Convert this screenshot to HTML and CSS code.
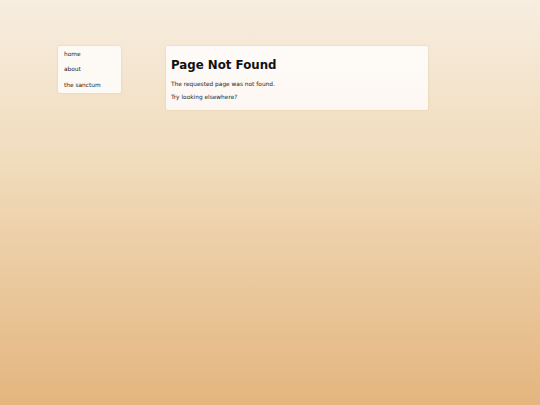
FILE: index.html
```html
<!DOCTYPE html>
<html>
<head>
<meta charset="utf-8">
<link rel="stylesheet" href="styles.css">
</head>
<body>
<div class="page">
  <nav class="nav">
    <a class="nav-item" href="#">home</a>
    <a class="nav-item" href="#">about</a>
    <a class="nav-item" href="#">the sanctum</a>
  </nav>
  <main class="content">
    <h1 class="title">Page Not Found</h1>
    <p class="text">The requested page was not found.</p>
    <p class="text">Try looking elsewhere?</p>
  </main>
</div>
</body>
</html>
```
FILE: styles.css
```css
html, body {
  margin: 0;
  padding: 0;
}
body {
  min-height: 405px;
  background: linear-gradient(to bottom, #f7ede0 0%, #f1dcbc 40%, #e4b57e 100%);
  font-family: "DejaVu Sans", sans-serif;
}
.page {
  display: flex;
  align-items: flex-start;
  gap: 45px;
  padding: 46px 0 0 58px;
}
.nav {
  width: 63px;
  display: flex;
  flex-direction: column;
  background: #fdfaf6;
  border-radius: 2px;
  box-shadow: 0 0 2px rgba(180, 130, 70, 0.25);
  padding: 1px 0 0 0;
}
.nav-item {
  display: block;
  padding: 0 6px;
  line-height: 15.3px;
  font-size: 5.85px;
  color: #222;
  text-decoration: none;
}
.content {
  width: 252px;
  padding: 12px 5px 8.5px 5px;
  background: linear-gradient(to bottom, #fdfbf8, #fdf7f3);
  border-radius: 2px;
  box-shadow: 0 0 2px rgba(180, 130, 70, 0.25);
}
.title {
  margin: 0 0 8px 0;
  font-size: 11.8px;
  line-height: 14px;
  font-weight: bold;
  color: #111;
}
.text {
  margin: 0 0 5px 0;
  font-size: 5.85px;
  line-height: 8px;
  color: #222;
}
.text:last-child {
  margin-bottom: 0;
}
```
